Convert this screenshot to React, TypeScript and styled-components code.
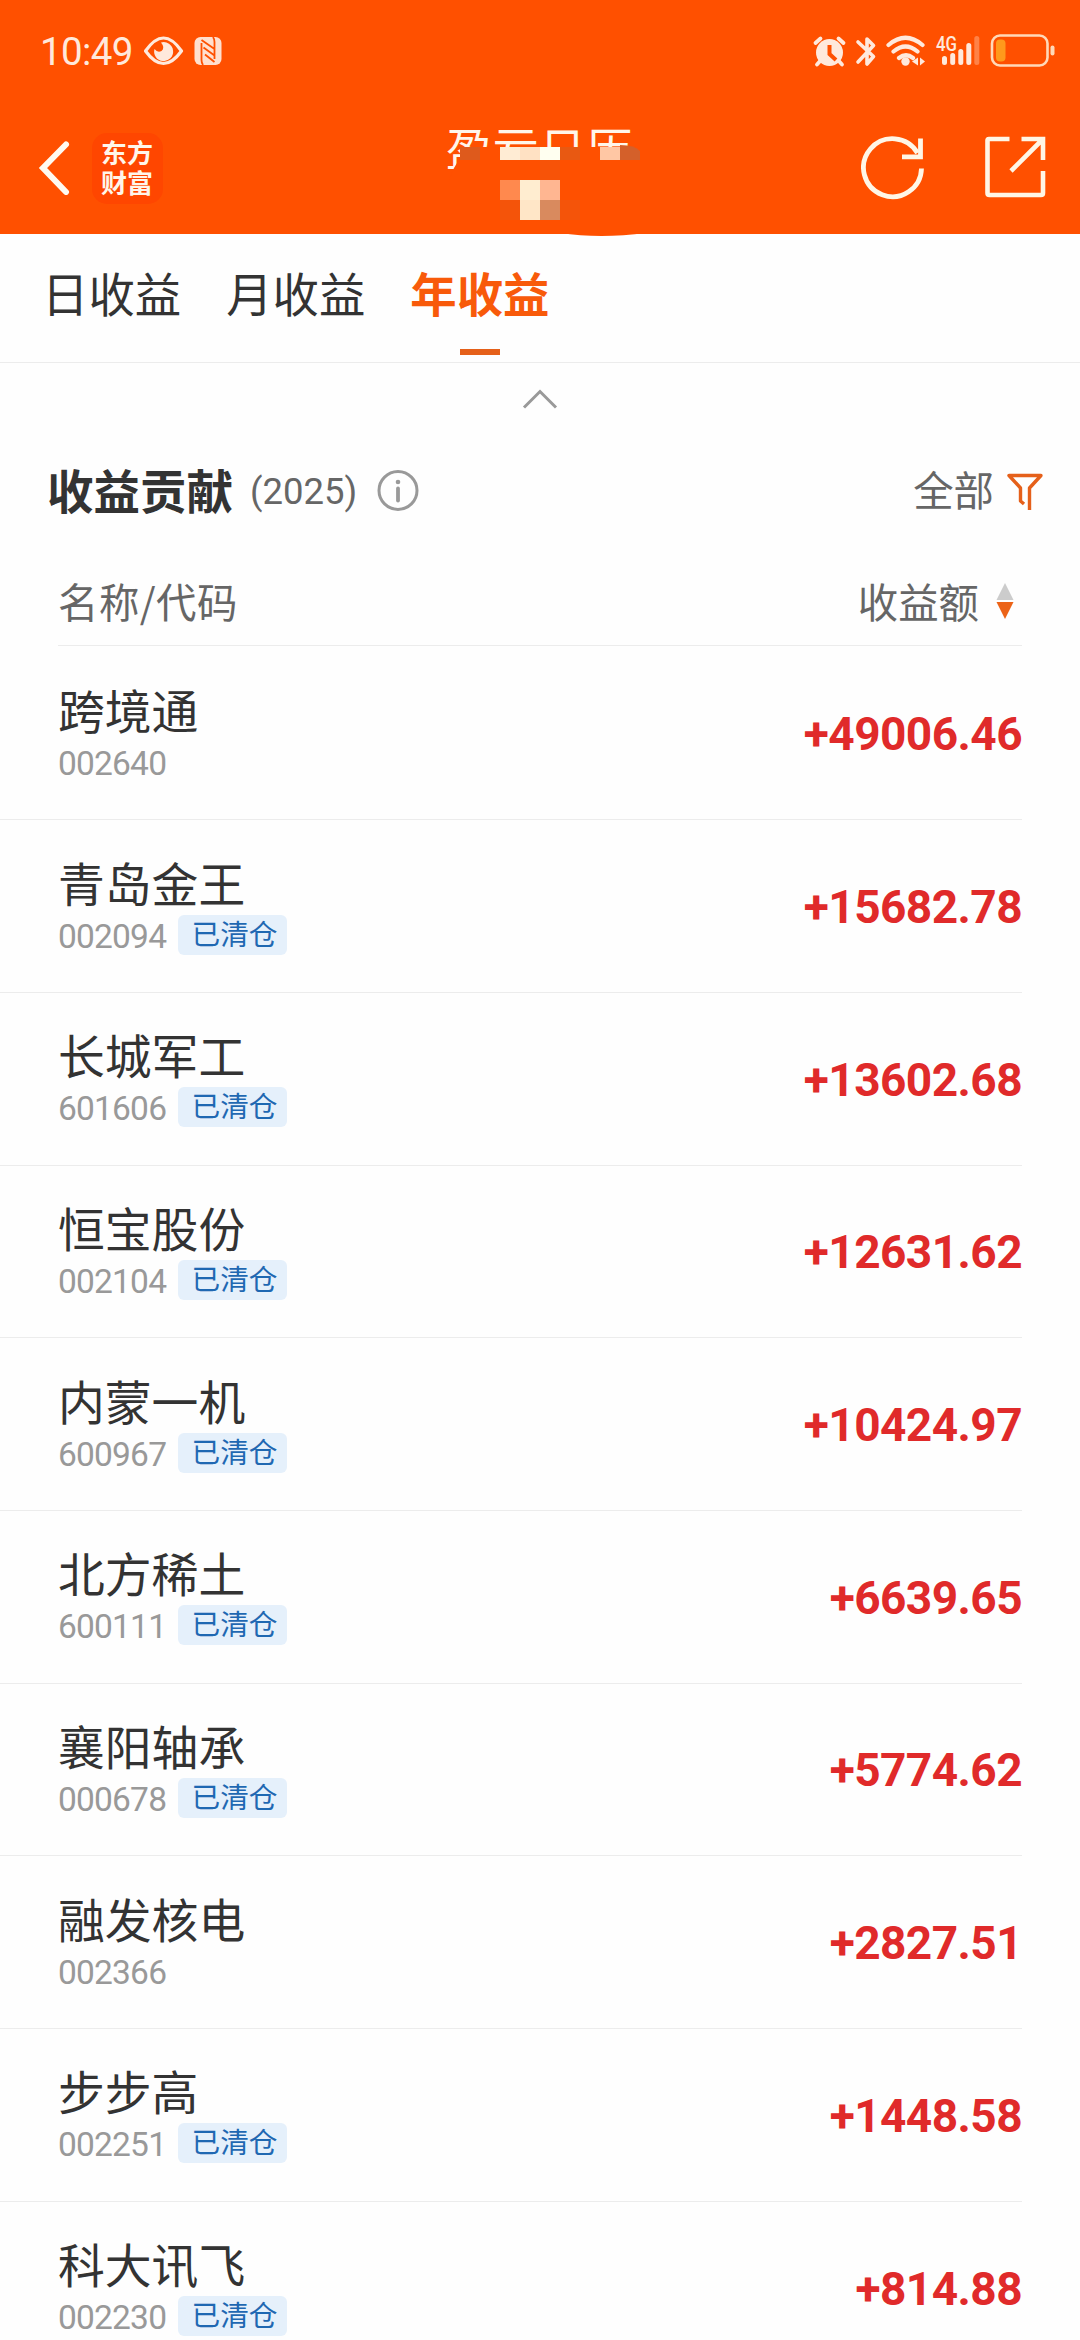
import React from "react";
import styled, { createGlobalStyle } from "styled-components";

const GlobalStyle = createGlobalStyle`
  * { box-sizing: border-box; }
  html, body { margin: 0; padding: 0; background: #fefefe; }
  body { width: 1080px; height: 2340px; overflow: hidden; font-family: "Noto Sans CJK SC", sans-serif; color: #333; }
  svg { display: block; flex: none; }
`;

const Screen = styled.div`
  display: flex;
  flex-direction: column;
  width: 1080px;
  height: 2340px;
  overflow: hidden;
  background: #fefefe;
`;

const Header = styled.header`
  position: relative;
  flex: none;
  height: 234px;
  background: #ff5000;
  color: #fff6ea;
`;

const StatusBar = styled.div`
  display: flex;
  align-items: center;
  height: 102px;
  padding: 0 25px 0 40px;
`;

const Clock = styled.span`
  width: 104px;
  padding-top: 1px;
  font: 400 38.5px/46px Roboto, sans-serif;
  letter-spacing: -0.6px;
  color: #ffe9dc;
`;

const StatusIcons = styled.div`
  margin-left: auto;
`;

const NavBar = styled.div`
  display: flex;
  align-items: center;
  height: 132px;
  padding: 0 33px 0 38px;
`;

const Logo = styled.div`
  display: flex;
  align-items: center;
  justify-content: center;
  width: 71px;
  height: 71px;
  margin: 0 0 0 21px;
  padding: 0 9px 2px;
  border-radius: 15px;
  background: #ff4600;
  font-size: 26px;
  line-height: 30px;
  font-weight: 700;
  word-break: break-all;
`;

const Title = styled.h1`
  flex: 1;
  align-self: flex-start;
  height: 70px;
  margin: 9px 0 0 283px;
  font-size: 46px;
  line-height: 70px;
  font-weight: 400;
  letter-spacing: 0.8px;
`;

const NavActions = styled.div`
  display: flex;
  gap: 60px;
`;

const Mosaic = styled.svg`
  position: absolute;
  left: 440px;
  top: 140px;
`;

const Tabs = styled.nav`
  display: flex;
  flex: none;
  gap: 45px;
  height: 129px;
  padding-left: 42px;
  border-bottom: 1px solid #ececec;
`;

const Tab = styled.div<{ $active?: boolean }>`
  display: flex;
  flex-direction: column;
  align-items: center;
  padding-top: 23px;
  font-size: 46.4px;
  line-height: 70px;
  font-weight: ${(p) => (p.$active ? 700 : 400)};
  color: ${(p) => (p.$active ? "#f85a0a" : "#333")};
  &::after {
    content: "";
    width: 40px;
    height: 6px;
    margin-top: 22px;
    background: ${(p) => (p.$active ? "#e5601a" : "transparent")};
  }
`;

const Collapse = styled.div`
  display: flex;
  flex: none;
  justify-content: center;
  height: 68px;
  padding-top: 26px;
`;

const SectionHead = styled.div`
  display: flex;
  flex: none;
  align-items: center;
  height: 120px;
  padding: 0 37px 0 47px;
`;

const SectionTitle = styled.h2`
  margin: 0;
  padding-bottom: 4px;
  font-size: 46.5px;
  line-height: 66px;
  font-weight: 700;
`;

const Year = styled.span`
  width: 108px;
  margin: 0 19px 0 17px;
  padding-top: 1px;
  font: 400 36.5px/50px Roboto, sans-serif;
  color: #666;
`;

const Filter = styled.div`
  display: flex;
  align-items: center;
  gap: 13px;
  margin-left: auto;
  font-size: 40.4px;
  line-height: 60px;
  color: #666;
`;

const FilterLabel = styled.span`
  padding-bottom: 4px;
`;

const ColumnHead = styled.div`
  display: flex;
  flex: none;
  align-items: center;
  justify-content: space-between;
  height: 95px;
  margin: 0 58px 1.5px 58px;
  padding: 6px 8px 0 0;
  border-bottom: 1px solid #ececec;
  font-size: 40.4px;
  line-height: 60px;
  color: #666;
`;

const ColumnLabel = styled.span`
  letter-spacing: 0.5px;
`;

const Sort = styled.span`
  display: flex;
  align-items: center;
  gap: 17px;
`;

const Row = styled.div`
  display: flex;
  flex: none;
  align-items: center;
  justify-content: space-between;
  height: 172.7px;
  margin-right: 58px;
  padding-left: 58px;
  border-bottom: 1.5px solid #ececec;
`;

const Stock = styled.div`
  display: flex;
  flex-direction: column;
  padding-bottom: 7px;
`;

const Name = styled.div`
  font-size: 46.8px;
  line-height: 61px;
  padding-bottom: 3px;
`;

const Meta = styled.div`
  display: flex;
  align-items: center;
  height: 40px;
`;

const Code = styled.span`
  width: 120px;
  padding-top: 4px;
  font: 400 33.5px/38px Roboto, sans-serif;
  letter-spacing: -0.8px;
  color: #999;
`;

const Badge = styled.span`
  width: 109px;
  height: 40px;
  padding-left: 13.5px;
  border-radius: 6px;
  background: #e5f0fb;
  color: #1f68b2;
  font-size: 28.7px;
  line-height: 35px;
`;

const Amount = styled.span`
  padding-top: 2px;
  font: 700 46px/54px Roboto, sans-serif;
  letter-spacing: -0.55px;
  color: #e02a2a;
`;

const rows = [
  { name: "跨境通", code: "002640", amount: "+49006.46", closed: false },
  { name: "青岛金王", code: "002094", amount: "+15682.78", closed: true },
  { name: "长城军工", code: "601606", amount: "+13602.68", closed: true },
  { name: "恒宝股份", code: "002104", amount: "+12631.62", closed: true },
  { name: "内蒙一机", code: "600967", amount: "+10424.97", closed: true },
  { name: "北方稀土", code: "600111", amount: "+6639.65", closed: true },
  { name: "襄阳轴承", code: "000678", amount: "+5774.62", closed: true },
  { name: "融发核电", code: "002366", amount: "+2827.51", closed: false },
  { name: "步步高", code: "002251", amount: "+1448.58", closed: true },
  { name: "科大讯飞", code: "002230", amount: "+814.88", closed: true },
];

const blocks: [number, number, number, number, string][] = [
  [460, 147, 20, 13, "#de5a1c"],
  [500, 147, 20, 13, "#ffecd4"],
  [520, 147, 20, 13, "#ffe1c3"],
  [540, 147, 20, 13, "#fffff0"],
  [560, 147, 20, 13, "#e85912"],
  [600, 147, 20, 13, "#ffc7a4"],
  [540, 160, 20, 20, "#f75308"],
  [500, 180, 20, 20, "#ff894e"],
  [520, 180, 20, 20, "#ffedd0"],
  [540, 180, 20, 20, "#ffb691"],
  [500, 200, 20, 20, "#f4540a"],
  [520, 200, 20, 20, "#ffe6c7"],
  [540, 200, 20, 20, "#d98a5e"],
  [560, 200, 20, 20, "#f4540a"],
];

const EyeAndNfc = () => (
  <svg width="80" height="30" viewBox="144 37 80 30" fill="none">
    <path d="M145.500 52Q163.500 26 181.500 52Q163.500 77 145.500 52Z" stroke="#ffe9dc" strokeWidth="3.200" strokeLinejoin="round" />
    <path d="M161 43.500a9.500 9.500 0 1 1-6.500 6.500q3 4 7 2q4-3-.5-8.500Z" fill="#ffe9dc" />
    <rect x="194.500" y="38" width="27" height="28" rx="6" fill="#ffe0cf" />
    <path d="M201.500 44v17q0 3 1.500 5M214.500 60V43q0-3-1.500-5M201.500 41l13 9M203.500 48.500l11 8M205 55.500l9.500 7.500" stroke="#ff5000" strokeWidth="1.800" />
  </svg>
);

const SystemIcons = () => (
  <svg width="243" height="36" viewBox="812 33 243 36" fill="none" stroke="#ffe9dc">
    <circle cx="829.500" cy="52.500" r="13.500" fill="#ffe9dc" stroke="none" />
    <path d="M815.500 43l5-4.500M843.500 43l-5-4.500M821 60l-4 4.500M838 60l4 4.500" strokeWidth="3.800" strokeLinecap="round" />
    <path d="M829.500 45v9l6.500 6" stroke="#ff5000" strokeWidth="4" />
    <path d="M858 42l15.500 14.500-6.500 7.500V39l6.500 6.500L858 62" strokeWidth="3.600" strokeLinejoin="round" strokeLinecap="round" />
    <path d="M888.500 45q17-14.500 34 0M893.500 51.500q12-10 24 0M899 58q7-5.500 14 0" strokeWidth="4.200" strokeLinecap="round" />
    <circle cx="905.500" cy="61.500" r="4.200" fill="#ffe9dc" stroke="none" />
    <path d="M912 61.500l6-4v8zM925 61.500l-5-4v8z" fill="#ffe9dc" stroke="none" />
    <text x="936" y="50.500" fontFamily="Roboto, sans-serif" fontSize="20" fontWeight="500" textLength="21" lengthAdjust="spacingAndGlyphs" fill="#ffe9dc" stroke="none">4G</text>
    <path d="M944.500 58.500v4M952.700 55.500v7M960.800 51.500v11M968.800 45.500v17" strokeWidth="5" strokeLinecap="round" />
    <path d="M976.800 38.500v24" stroke="#ff8247" strokeWidth="5" strokeLinecap="round" />
    <rect x="992" y="35.500" width="55.500" height="30" rx="8" stroke="#ffd9b8" strokeWidth="2.600" />
    <rect x="996" y="39.500" width="9.500" height="22" rx="4" fill="#ff9a1c" stroke="none" />
    <path d="M1052.500 47.500v6" stroke="#ffd9b8" strokeWidth="4" strokeLinecap="round" />
  </svg>
);

const App = () => (
  <Screen>
    <GlobalStyle />
    <Header>
      <StatusBar>
        <Clock>10:49</Clock>
        <EyeAndNfc />
        <StatusIcons>
          <SystemIcons />
        </StatusIcons>
      </StatusBar>
      <NavBar>
        <svg width="33" height="54" viewBox="0 0 33 54" fill="none">
          <path d="M28 3.500L5 27L28 51" stroke="#fffaf0" strokeWidth="6" strokeLinecap="round" strokeLinejoin="miter" />
        </svg>
        <Logo>东方财富</Logo>
        <Title>盈亏日历</Title>
        <NavActions>
          <svg width="64" height="64" viewBox="861 136 64 64" fill="none" stroke="#fff6e6" strokeWidth="4.800">
            <path d="M921.500 168.500a29 29 0 1 1-4-15.500" />
            <path d="M920.500 138.500v18.300H902" />
          </svg>
          <svg width="62" height="62" viewBox="985 137 62 62" fill="none" stroke="#fff6e6" strokeWidth="4.600" strokeLinejoin="round">
            <path d="M1009.500 140H989q-1.500 0-1.500 1.500V194q0 2 2 2h51.500q2 0 2-2V172" />
            <path d="M1021.500 140h21.500v21M1042 141l-31 31" strokeLinejoin="miter" />
          </svg>
        </NavActions>
      </NavBar>
      <Mosaic width="215" height="98" viewBox="440 140 215 98">
        <path d="M460 158L454 168L449 180H650V147H479Q466 149 460 158Z" fill="#ff5000" />
        {blocks.map(([x, y, w, h, fill]) => (
          <rect key={`${x}-${y}`} x={x} y={y} width={w} height={h} fill={fill} />
        ))}
        <path d="M620 145q15 0 20 6v9h-20Z" fill="#d4602a" />
        <path d="M560 233Q600 239 646 233Z" fill="#ff5000" />
      </Mosaic>
    </Header>
    <Tabs>
      <Tab>日收益</Tab>
      <Tab>月收益</Tab>
      <Tab $active>年收益</Tab>
    </Tabs>
    <Collapse>
      <svg width="36" height="20" viewBox="0 0 36 20" fill="none">
        <path d="M2 18.500L18 2.500L34 18.500" stroke="#999" strokeWidth="3" />
      </svg>
    </Collapse>
    <SectionHead>
      <SectionTitle>收益贡献</SectionTitle>
      <Year>(2025)</Year>
      <svg width="42" height="42" viewBox="0 0 42 42" fill="none" stroke="#999">
        <circle cx="21" cy="20.500" r="19" strokeWidth="3" />
        <path d="M21 18.500v12" strokeWidth="3.800" strokeLinecap="round" />
        <circle cx="21" cy="12" r="2.300" fill="#999" stroke="none" />
      </svg>
      <Filter>
        <FilterLabel>全部</FilterLabel>
        <svg width="36" height="38" viewBox="0 0 36 38" fill="none" stroke="#e5601a" strokeWidth="3.400">
          <path d="M17 32l-3.500-3V16L2 3.500H34L22.500 16V38" strokeLinejoin="round" />
        </svg>
      </Filter>
    </SectionHead>
    <ColumnHead>
      <ColumnLabel>名称/代码</ColumnLabel>
      <Sort>
        收益额
        <svg width="18" height="36" viewBox="0 0 18 36">
          <path d="M9 0l8.500 17H0.500Z" fill="#ccc" />
          <path d="M9 36l8.500-17H0.500Z" fill="#ec6317" />
        </svg>
      </Sort>
    </ColumnHead>
    {rows.map((r) => (
      <Row key={r.code}>
        <Stock>
          <Name>{r.name}</Name>
          <Meta>
            <Code>{r.code}</Code>
            {r.closed && <Badge>已清仓</Badge>}
          </Meta>
        </Stock>
        <Amount>{r.amount}</Amount>
      </Row>
    ))}
  </Screen>
);

export default App;
